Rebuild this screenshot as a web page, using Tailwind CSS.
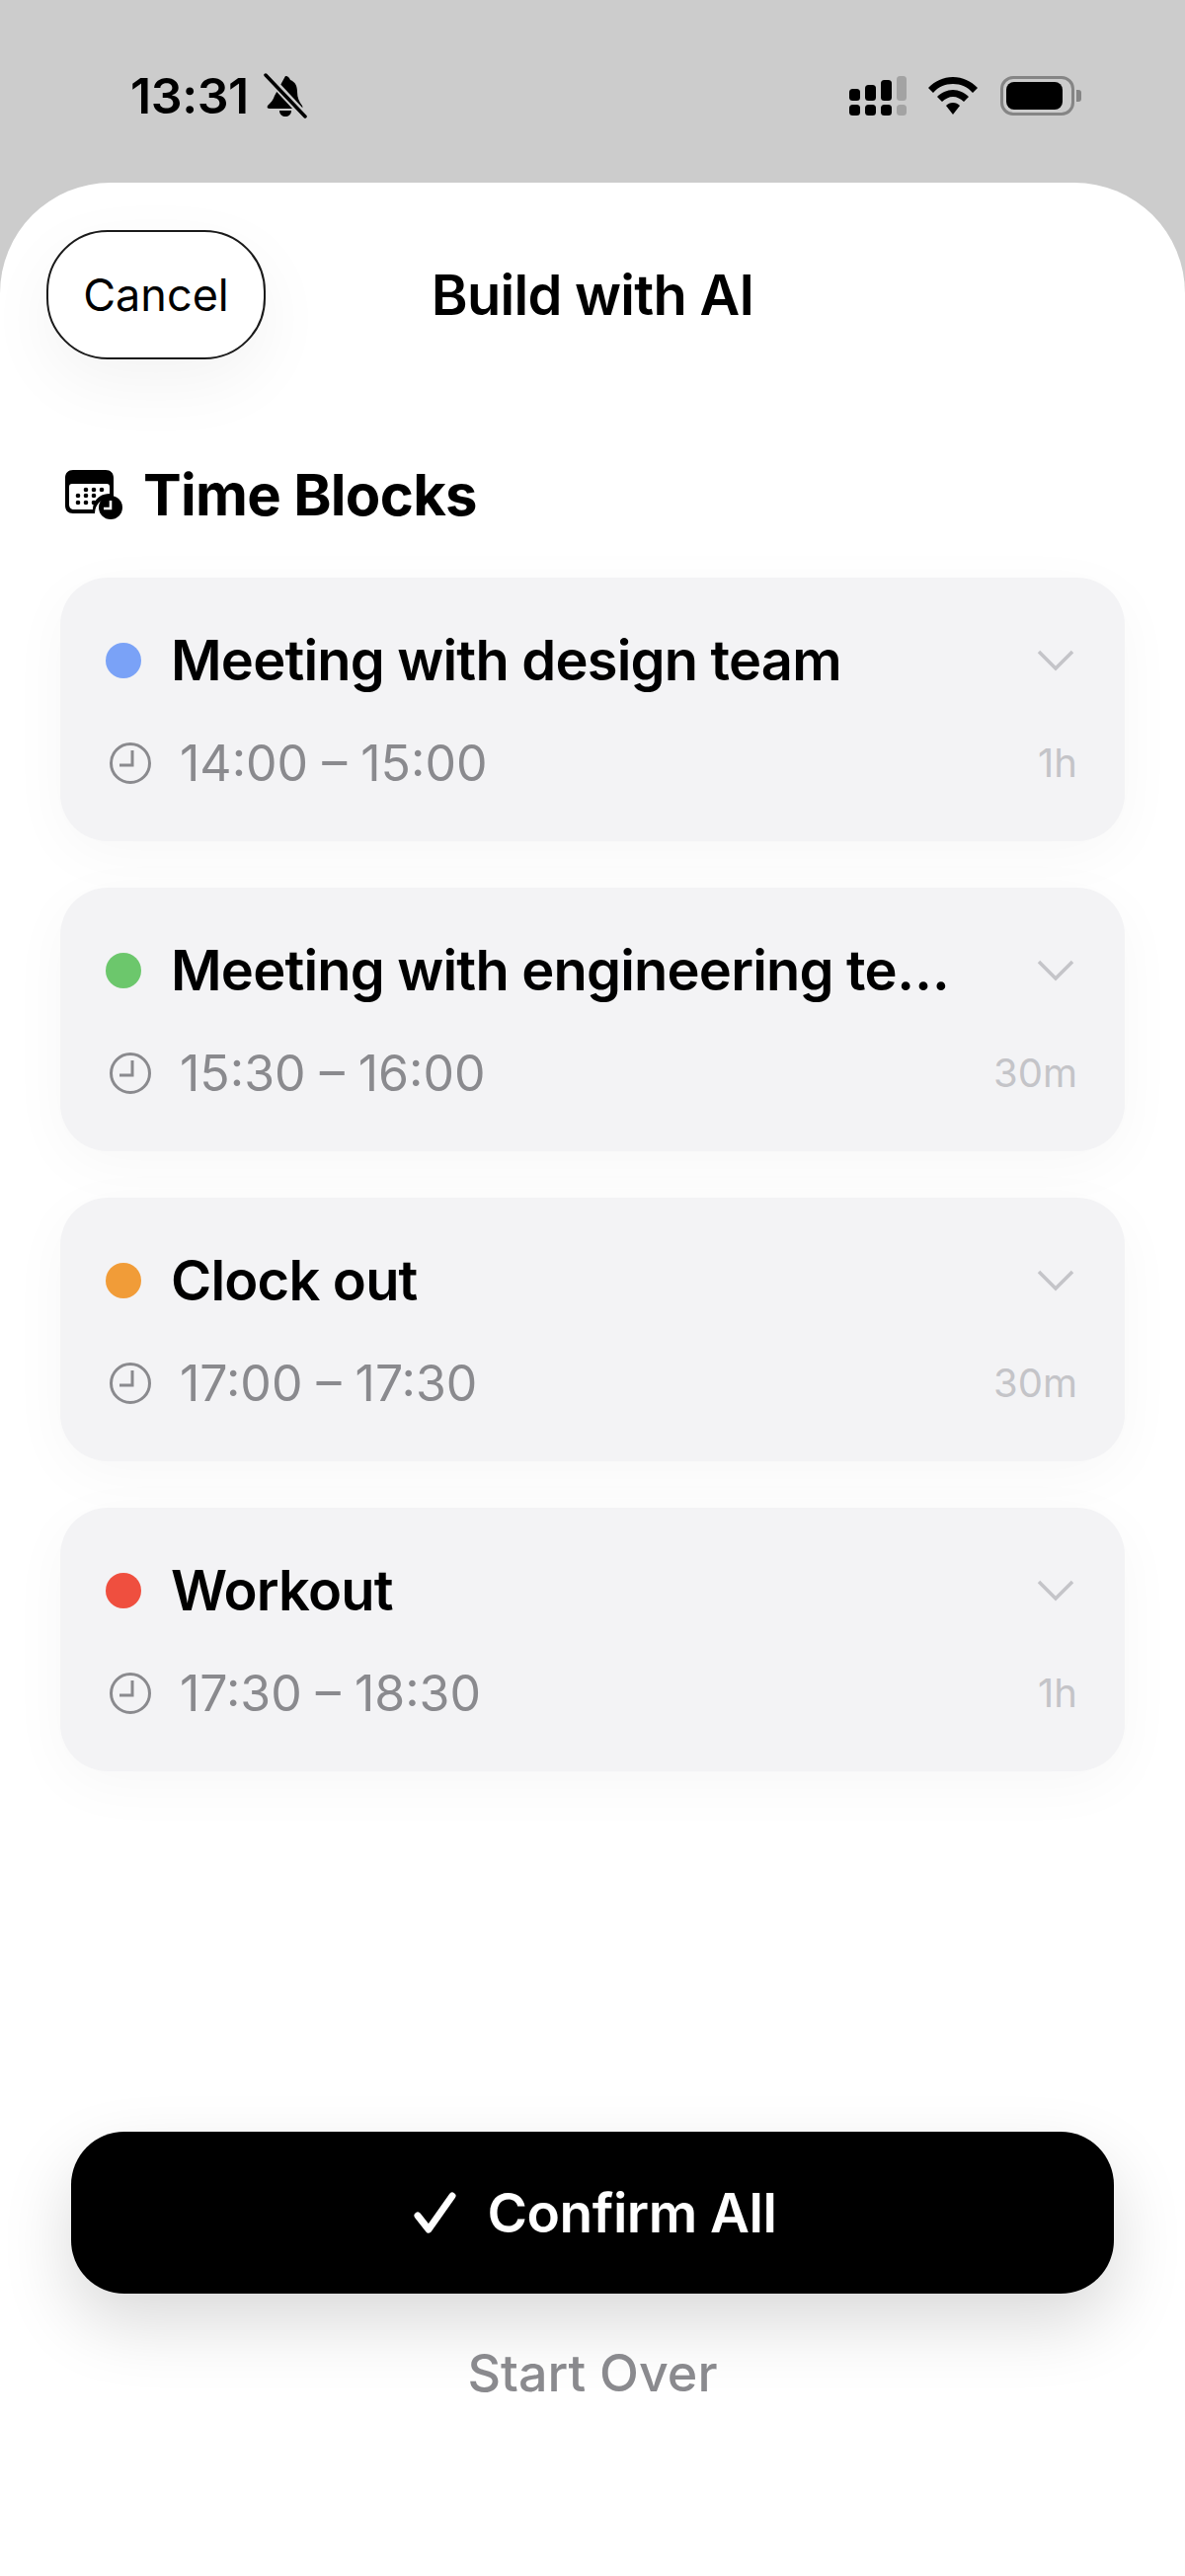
<!DOCTYPE html>
<html lang="en">
  <head>
    <meta charset="UTF-8" />
    <meta name="viewport" content="width=device-width, initial-scale=1.0" />
    <title>Build with AI</title>
    <script src="https://cdn.jsdelivr.net/npm/@tailwindcss/browser@4"></script>
  </head>
  <body class="bg-[#cccccc] font-['Inter',sans-serif] text-black">
    <div class="flex flex-col h-[2609px] w-[1200px] overflow-hidden">
      <!-- status bar -->
      <div class="flex items-center justify-between h-[185px] shrink-0 pl-[132px] pr-[105px] pt-[9px]">
        <div class="flex items-center gap-[14px]">
          <span class="text-[50px] leading-none font-semibold tracking-[-0.4px]">13:31</span>
          <svg width="46" height="46" viewBox="0 0 46 46">
            <path d="M23 3c3 0 4 2 5 4 5 2 7 6 7 12 0 6 2 10 5 14 1 2 0 3-1 3H7c-2 0-3-1-2-3 3-3 6-6 7-10z" fill="black" />
            <path d="M17 38h12c0 4-3 6-6 6s-6-2-6-6z" fill="black" />
            <path d="M3 1l40 43" stroke="#cccccc" stroke-width="8" />
            <path d="M3 2l40 42" stroke="black" stroke-width="3.5" stroke-linecap="round" />
          </svg>
        </div>
        <div class="flex items-center">
          <svg width="60" height="40" viewBox="0 0 60 40" class="mr-[20px]">
            <rect x="0" y="13" width="11" height="12" rx="3.5" fill="black" />
            <rect x="16" y="9" width="11" height="16" rx="3.5" fill="black" />
            <rect x="32" y="4" width="11" height="21" rx="3.5" fill="black" />
            <rect x="48" y="0" width="10" height="25" rx="3.5" fill="#a3a3a3" />
            <rect x="0" y="29" width="11" height="11" rx="3.5" fill="black" />
            <rect x="16" y="29" width="11" height="11" rx="3.5" fill="black" />
            <rect x="32" y="29" width="11" height="11" rx="3.5" fill="black" />
            <rect x="48" y="29" width="10" height="11" rx="3.5" fill="#a3a3a3" />
          </svg>
          <svg width="50" height="38" viewBox="0 0 50 38" class="mr-[23px]">
            <path d="M25 0C15 0 7 4 0 11l5 5C10 10 17 7 25 7s15 3 20 9l5-5C43 4 35 0 25 0z" fill="black" />
            <path d="M25 13c-6 0-12 3-16 7l5 5c3-3 7-5 11-5s8 2 11 5l5-5c-4-4-10-7-16-7z" fill="black" />
            <path d="M25 26c-3 0-5 1-7 3l7 9 7-9c-2-2-4-3-7-3z" fill="black" />
          </svg>
          <div class="flex items-center">
            <div class="flex items-center w-[75px] h-[40px] border-[3px] border-[#858585] rounded-[13px] p-[3px]">
              <div class="w-[57px] h-[28px] rounded-[8px] bg-black"></div>
            </div>
            <div class="w-[5px] h-[12px] ml-[2px] rounded-r-[3px] bg-[#858585]"></div>
          </div>
        </div>
      </div>

      <!-- sheet -->
      <div class="flex flex-col flex-1 bg-white rounded-t-[112px]">
        <div class="relative flex items-center justify-center h-[131px] mt-[48px] shrink-0">
          <button class="absolute left-[47px] top-0 w-[222px] h-[131px] rounded-[62px] border-2 border-[#1a1a1a] bg-white text-[45px] shadow-[0_24px_70px_rgba(0,0,0,0.05)]">Cancel</button>
          <h1 class="text-[56px] font-semibold tracking-[-0.7px]">Build with AI</h1>
        </div>

        <div class="flex items-center gap-[21px] mt-[108px] pl-[66px]">
          <svg width="58" height="50" viewBox="0 0 58 50">
            <path fill-rule="evenodd" d="M8 0h33c5 0 8 3 8 8v21a15 15 0 0 0-19 15H8c-5 0-8-3-8-8V8c0-5 3-8 8-8zM7 14c-2 0-3 1-3 3v18c0 3 2 5 5 5h19c0-9 7-16 17-16V17c0-2-1-3-3-3z" fill="black" />
            <g fill="black">
              <circle cx="21" cy="20" r="2.3" /><circle cx="29" cy="20" r="2.3" /><circle cx="37" cy="20" r="2.3" />
              <circle cx="13" cy="26" r="2.3" /><circle cx="21" cy="26" r="2.3" /><circle cx="29" cy="26" r="2.3" />
              <circle cx="13" cy="33" r="2.3" /><circle cx="21" cy="33" r="2.3" /><circle cx="29" cy="33" r="2.3" />
            </g>
            <circle cx="46" cy="38" r="12" fill="black" />
            <path d="M46 31v8h-7" stroke="white" stroke-width="2.6" fill="none" />
          </svg>
          <h2 class="text-[58px] leading-none font-bold tracking-[-0.7px]">Time Blocks</h2>
        </div>

        <!-- time block cards -->
        <div class="flex flex-col gap-[47px] mt-[55px] px-[61px]">
          <div class="h-[267px] rounded-[48px] bg-[#f3f3f5] pl-[46px] pr-[49px] pt-[52px] shadow-[0_14px_60px_rgba(0,0,0,0.035)]">
            <div class="flex items-center h-[64px]">
              <div class="w-[36px] h-[36px] rounded-full bg-[#7aa2f7] shrink-0"></div>
              <div class="w-[790px] ml-[30px] truncate text-[56px] font-semibold tracking-[-0.8px]">Meeting with design team</div>
              <svg width="38" height="24" viewBox="0 0 38 24" class="ml-auto mr-[2px]">
                <path d="M2 3l17 17L36 3" stroke="#c4c4c8" stroke-width="3.5" fill="none" />
              </svg>
            </div>
            <div class="flex items-center mt-[42px] h-[60px]">
              <svg width="44" height="44" viewBox="0 0 44 44" class="ml-[3px]">
                <circle cx="22" cy="22" r="19.5" stroke="#8a8a8e" stroke-width="3" fill="none" />
                <path d="M24 9v15H11" stroke="#8a8a8e" stroke-width="3" fill="none" />
              </svg>
              <span class="ml-[28px] text-[50px] text-[#8a8a8e]">14:00 – 15:00</span>
              <span class="ml-auto -mr-[1px] text-[40px] text-[#c4c4c8]">1h</span>
            </div>
          </div>

          <div class="h-[267px] rounded-[48px] bg-[#f3f3f5] pl-[46px] pr-[49px] pt-[52px] shadow-[0_14px_60px_rgba(0,0,0,0.035)]">
            <div class="flex items-center h-[64px]">
              <div class="w-[36px] h-[36px] rounded-full bg-[#6cc76c] shrink-0"></div>
              <div class="w-[790px] ml-[30px] truncate text-[56px] font-semibold tracking-[-0.8px]">Meeting with engineering team</div>
              <svg width="38" height="24" viewBox="0 0 38 24" class="ml-auto mr-[2px]">
                <path d="M2 3l17 17L36 3" stroke="#c4c4c8" stroke-width="3.5" fill="none" />
              </svg>
            </div>
            <div class="flex items-center mt-[42px] h-[60px]">
              <svg width="44" height="44" viewBox="0 0 44 44" class="ml-[3px]">
                <circle cx="22" cy="22" r="19.5" stroke="#8a8a8e" stroke-width="3" fill="none" />
                <path d="M24 9v15H11" stroke="#8a8a8e" stroke-width="3" fill="none" />
              </svg>
              <span class="ml-[28px] text-[50px] text-[#8a8a8e]">15:30 – 16:00</span>
              <span class="ml-auto -mr-[1px] text-[40px] text-[#c4c4c8]">30m</span>
            </div>
          </div>

          <div class="h-[267px] rounded-[48px] bg-[#f3f3f5] pl-[46px] pr-[49px] pt-[52px] shadow-[0_14px_60px_rgba(0,0,0,0.035)]">
            <div class="flex items-center h-[64px]">
              <div class="w-[36px] h-[36px] rounded-full bg-[#f19c38] shrink-0"></div>
              <div class="w-[790px] ml-[30px] truncate text-[56px] font-semibold tracking-[-0.8px]">Clock out</div>
              <svg width="38" height="24" viewBox="0 0 38 24" class="ml-auto mr-[2px]">
                <path d="M2 3l17 17L36 3" stroke="#c4c4c8" stroke-width="3.5" fill="none" />
              </svg>
            </div>
            <div class="flex items-center mt-[42px] h-[60px]">
              <svg width="44" height="44" viewBox="0 0 44 44" class="ml-[3px]">
                <circle cx="22" cy="22" r="19.5" stroke="#8a8a8e" stroke-width="3" fill="none" />
                <path d="M24 9v15H11" stroke="#8a8a8e" stroke-width="3" fill="none" />
              </svg>
              <span class="ml-[28px] text-[50px] text-[#8a8a8e]">17:00 – 17:30</span>
              <span class="ml-auto -mr-[1px] text-[40px] text-[#c4c4c8]">30m</span>
            </div>
          </div>

          <div class="h-[267px] rounded-[48px] bg-[#f3f3f5] pl-[46px] pr-[49px] pt-[52px] shadow-[0_14px_60px_rgba(0,0,0,0.035)]">
            <div class="flex items-center h-[64px]">
              <div class="w-[36px] h-[36px] rounded-full bg-[#ef4f3f] shrink-0"></div>
              <div class="w-[790px] ml-[30px] truncate text-[56px] font-semibold tracking-[-0.8px]">Workout</div>
              <svg width="38" height="24" viewBox="0 0 38 24" class="ml-auto mr-[2px]">
                <path d="M2 3l17 17L36 3" stroke="#c4c4c8" stroke-width="3.5" fill="none" />
              </svg>
            </div>
            <div class="flex items-center mt-[42px] h-[60px]">
              <svg width="44" height="44" viewBox="0 0 44 44" class="ml-[3px]">
                <circle cx="22" cy="22" r="19.5" stroke="#8a8a8e" stroke-width="3" fill="none" />
                <path d="M24 9v15H11" stroke="#8a8a8e" stroke-width="3" fill="none" />
              </svg>
              <span class="ml-[28px] text-[50px] text-[#8a8a8e]">17:30 – 18:30</span>
              <span class="ml-auto -mr-[1px] text-[40px] text-[#c4c4c8]">1h</span>
            </div>
          </div>
        </div>

        <!-- actions -->
        <div class="flex flex-col items-center mt-auto mb-[170px]">
          <button class="flex items-center justify-center gap-[30px] w-[1056px] h-[164px] rounded-[54px] bg-black text-white text-[55px] font-semibold tracking-[-0.5px] shadow-[0_30px_70px_rgba(0,0,0,0.15)]">
            <svg width="46" height="42" viewBox="0 0 46 42" class="ml-[4px]">
              <path d="M5 24l11 14L40 4" stroke="white" stroke-width="7" stroke-linecap="round" stroke-linejoin="round" fill="none" />
            </svg>
            Confirm All
          </button>
          <button class="mt-[46px] text-[52px] leading-[70px] font-medium text-[#8a8a8e]">Start Over</button>
        </div>
      </div>
    </div>
  </body>
</html>
